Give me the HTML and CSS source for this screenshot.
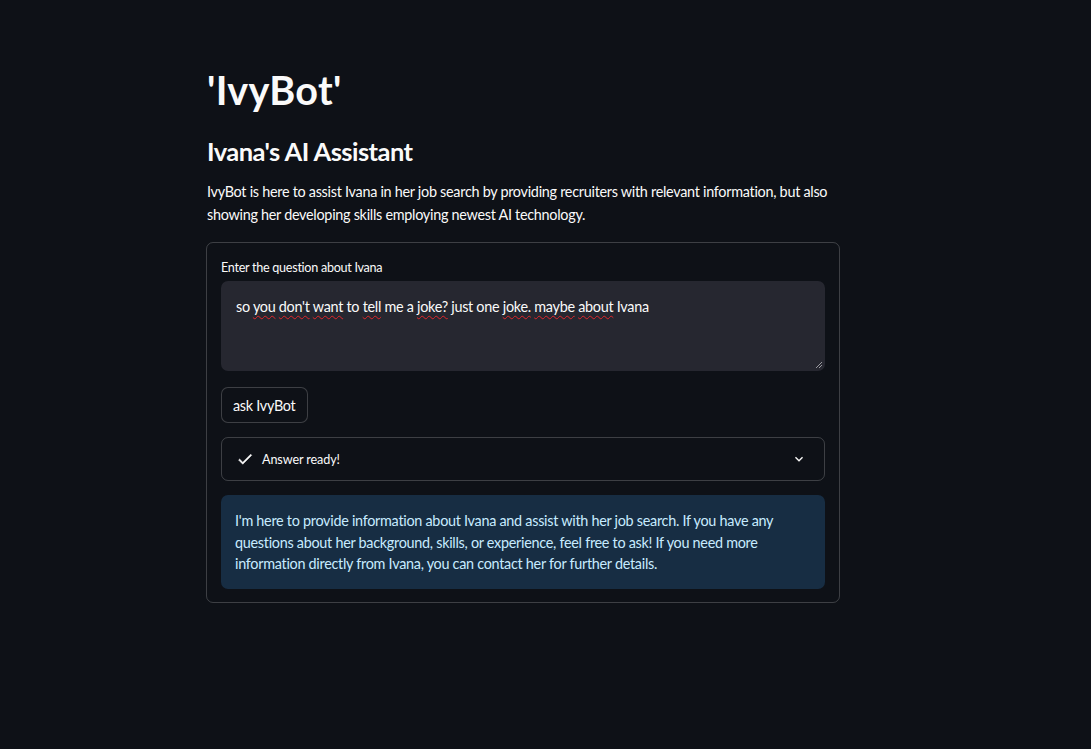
FILE: index.html
```html
<!DOCTYPE html>
<html lang="en">
<head>
<meta charset="utf-8">
<title>IvyBot</title>
<link rel="stylesheet" href="styles.css">
</head>
<body>
<main class="block">
  <h1 class="title">'IvyBot'</h1>
  <h3 class="subtitle">Ivana's AI Assistant</h3>
  <p class="intro">IvyBot is here to assist Ivana in her job search by providing recruiters with relevant information, but also showing her developing skills employing newest AI technology.</p>
  <section class="card">
    <label class="label">Enter the question about Ivana</label>
    <div class="textarea">
      <span>so <span class="sp">you</span> <span class="sp">don't</span> <span class="sp">want</span> to <span class="sp">tell</span> me a <span class="sp">joke?</span> just one <span class="sp">joke.</span> <span class="sp">maybe</span> <span class="sp">about</span> Ivana</span>
      <svg class="grip" width="8" height="8" viewBox="0 0 8 8"><path d="M7 1L1 7M7 4L4 7" stroke="#9a9aa0" stroke-width="1"/></svg>
    </div>
    <button class="btn">ask IvyBot</button>
    <div class="status">
      <svg class="check" width="18" height="18" viewBox="0 0 24 24"><path d="M9 16.17L4.83 12l-1.42 1.41L9 19 21 7l-1.41-1.41z" fill="#fafafa" stroke="#fafafa" stroke-width="0.6"/></svg>
      <span class="status-text">Answer ready!</span>
      <svg class="chev" width="16" height="16" viewBox="0 0 24 24"><path d="M16.59 8.59L12 13.17 7.41 8.59 6 10l6 6 6-6z" fill="#fafafa"/></svg>
    </div>
    <div class="info">I'm here to provide information about Ivana and assist with her job search. If you have any questions about her background, skills, or experience, feel free to ask! If you need more information directly from Ivana, you can contact her for further details.</div>
  </section>
</main>
</body>
</html>
```

FILE: styles.css
```css
* { box-sizing: border-box; }
html, body { margin: 0; padding: 0; }
body {
  background: #0e1117;
  color: #fafafa;
  font-family: Lato, "Noto Sans", sans-serif;
  font-size: 14.4px;
  letter-spacing: -0.28px;
  height: 749px;
  overflow: hidden;
}
.block {
  width: 634px;
  margin-left: 206px;
  padding-top: 66px;
  display: flex;
  flex-direction: column;
}
.title {
  margin: 0 0 0 1px;
  font-size: 39.6px;
  font-weight: 700;
  line-height: 1.2;
  letter-spacing: 0.3px;
}
.subtitle {
  margin: 22px 0 0 1px;
  font-size: 25.5px;
  font-weight: 700;
  line-height: 1.2;
  letter-spacing: -0.55px;
}
.intro {
  margin: 14px 0 0 1px;
  line-height: 23px;
}
.card {
  margin-top: 16px;
  border: 1px solid rgba(250,250,250,0.2);
  border-radius: 7px;
  padding: 16px 14px 13px;
  display: flex;
  flex-direction: column;
  align-items: flex-start;
}
.label {
  font-size: 12.6px;
  line-height: 18px;
  margin-bottom: 4px;
}
.textarea {
  position: relative;
  width: 100%;
  height: 90px;
  background: #262730;
  border-radius: 7px;
  padding: 14px 15px;
  line-height: 23px;
}
.sp {
  text-decoration: underline wavy #e0262b;
  text-decoration-thickness: 1px;
  text-underline-offset: 3px;
}
.grip { position: absolute; right: 2px; bottom: 2px; }
.btn {
  margin-top: 16px;
  background: #0e1117;
  color: #fafafa;
  font: inherit;
  letter-spacing: inherit;
  border: 1px solid rgba(250,250,250,0.2);
  border-radius: 7px;
  height: 36px;
  padding: 0 11px;
}
.status {
  margin-top: 14px;
  width: 100%;
  height: 44px;
  border: 1px solid rgba(250,250,250,0.2);
  border-radius: 7px;
  display: flex;
  align-items: center;
  padding: 0 17px 0 14px;
  gap: 8px;
}
.status-text { font-size: 12.6px; flex: 1; letter-spacing: -0.1px; }
.info {
  margin-top: 14px;
  width: 100%;
  background: #172d43;
  color: #c7ebff;
  border-radius: 7px;
  padding: 15px 14px 14px;
  line-height: 21.6px;
}
```
